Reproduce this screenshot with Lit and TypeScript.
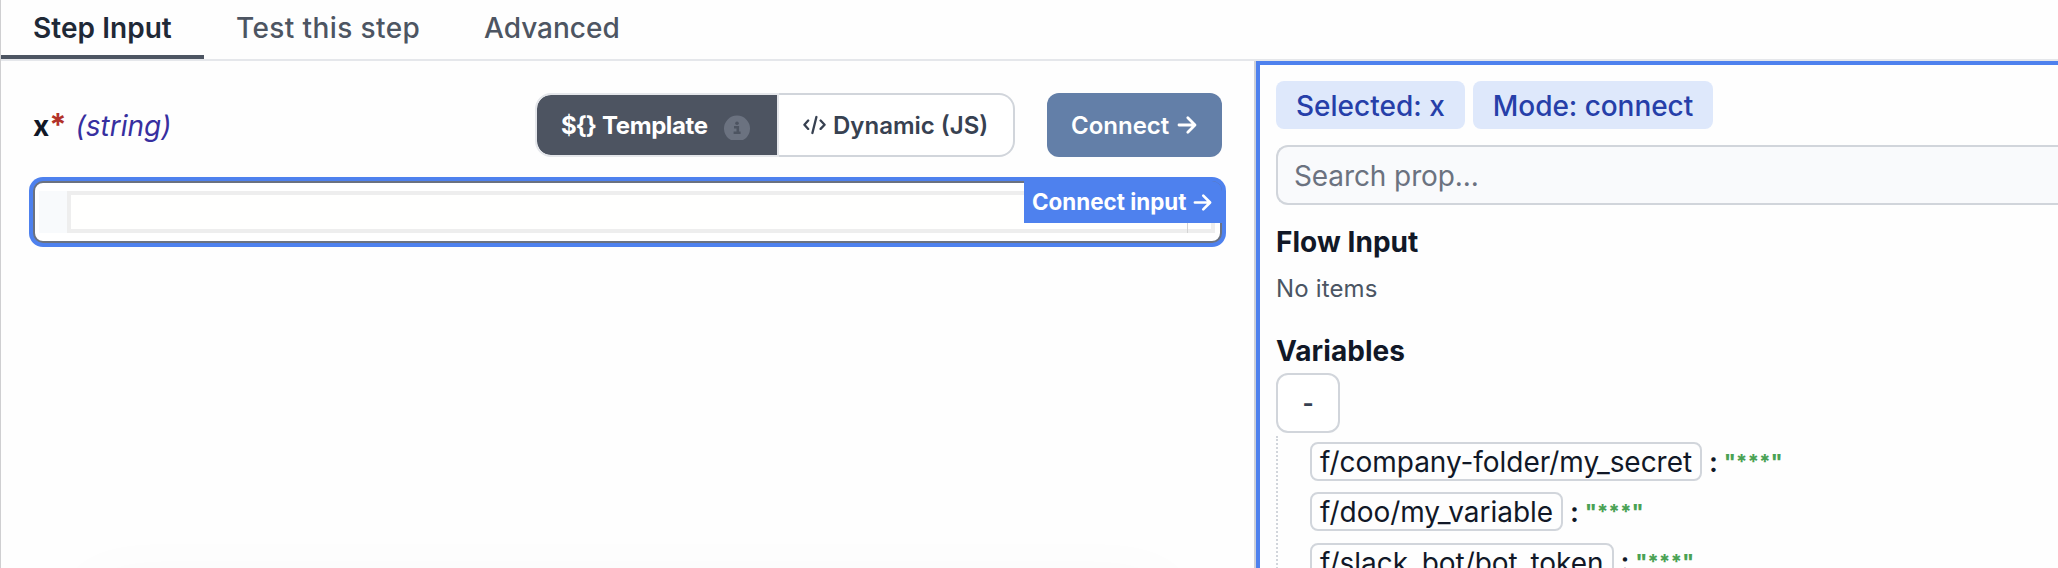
import { LitElement, html, css, svg } from "lit";
import { customElement } from "lit/decorators.js";

const arrow = (cls: string) => html`<svg class=${cls} viewBox="0 0 20 20" fill="none" stroke="currentColor" stroke-width="2.8" stroke-linecap="round" stroke-linejoin="round">${svg`<path d="M2 10H17.5M10.8 2.8L18 10L10.8 17.2"/>`}</svg>`;

const variables = ["f/company-folder/my_secret", "f/doo/my_variable", "f/slack_bot/bot_token"];

@customElement("app-root")
export class AppRoot extends LitElement {
  static styles = css`
    :host {
      display: block;
      height: 568px;
      overflow: hidden;
      background: #fefefe;
      color: #111827;
      font-family: Inter, "Liberation Sans", sans-serif;
      font-size: 28px;
    }
    * { box-sizing: border-box; }
    .frame { height: 568px; border-left: 1px solid #cfcfd1; display: flex; flex-direction: column; }
    .tabs { flex: none; height: 61px; display: flex; border-bottom: 2px solid #e5e7eb; }
    .tab { height: 59px; padding: 7px 32px 0; line-height: 42px; font-weight: 500; color: #4d5562; white-space: nowrap; border-bottom: 4px solid transparent; }
    .tab.on { width: 203px; color: #1f2937; border-bottom-color: #4d5562; font-weight: 600; letter-spacing: 0.05px; }
    .tab.wide { width: 248px; letter-spacing: 0.4px; }
    .body { flex: 1; min-height: 0; display: flex; }
    .left { width: 1253px; flex: none; padding: 32px 32px 0; display: flex; flex-direction: column; overflow: hidden; }
    .head { height: 64px; display: flex; align-items: center; }
    .label { flex: 1; display: flex; align-items: baseline; white-space: nowrap; padding-top: 1px; }
    .name { font-weight: 700; }
    .req { color: #b23129; font-weight: 700; font-size: 31px; line-height: 34px; }
    .type { margin-left: 9px; font-style: italic; color: #372fa0; }
    .toggle { display: flex; height: 64px; margin-right: 32px; font-size: 24px; font-weight: 600; white-space: nowrap; }
    .opt { display: flex; align-items: center; border: 2px solid #d1d5db; }
    .opt.a { width: 244px; padding-left: 24px; border-color: #e5e7eb; border-radius: 16px 0 0 16px; background: #4d5461; color: #fff; background-clip: padding-box; }
    .opt.b { width: 236px; padding-left: 24px; border-left: 0; border-radius: 0 16px 16px 0; background: #fff; color: #374151; }
    .t0 { width: 41px; }
    .t1 { width: 122px; }
    .t0, .t1 { font-weight: 700; letter-spacing: -0.4px; }
    .t0 { letter-spacing: -1.1px; }
    .info { width: 26px; height: 26px; margin: 5px 0 0 0; }
    .code { width: 23px; height: 20px; margin-right: 7px; }
    .connect { width: 175px; height: 64px; border-radius: 12px; background: #637fa8; color: #fff; display: flex; align-items: center; padding-left: 24px; font-size: 24px; font-weight: 600; white-space: nowrap; }
    .ar { width: 20px; height: 20px; margin-left: 8px; }
    .editor { position: relative; height: 62px; margin-top: 24px; border: 2px solid #6b7280; border-radius: 10px; box-shadow: 0 0 0 4px #4e81ee; background: #fff; padding: 8px 5px 8px 4px; display: flex; }
    .gutter { width: 28px; background: #f8fafc; }
    .line { flex: 1; border: 4px solid #eee; background: #fffffe; display: flex; justify-content: flex-end; padding-right: 23px; }
    .ruler { width: 1px; height: 38px; background: #d4d4d4; }
    .tag { position: absolute; top: -2px; right: -2px; width: 198px; height: 42px; border-radius: 0 10px 0 0; background: #4e81ee; color: #fff; display: flex; align-items: center; padding: 0 0 2px 8px; font-size: 22.4px; font-weight: 700; white-space: nowrap; }
    .tag .ar { margin: 2px 0 0 7px; width: 19px; height: 19px; }
    .spacer { flex: 1; }
    .drawer { flex: none; height: 10px; margin: 0 70px -46px; border-radius: 40px; box-shadow: 0 0 70px 20px rgba(0, 0, 0, 0.03); }
    .right { flex: 1; min-width: 0; border-left: 2px solid #ced1d8; }
    .pane { height: 600px; border: 4px solid #4e81ee; border-right: 0; padding: 16px 0 0 16px; display: flex; flex-direction: column; align-items: flex-start; }
    .badges { display: flex; gap: 8px; }
    .badge { height: 48px; line-height: 51px; padding: 0 20px; border-radius: 8px; background: #dee8fb; color: #263fa9; font-weight: 500; white-space: nowrap; }
    .badge + .badge { letter-spacing: -0.05px; }
    .search { flex: none; align-self: stretch; height: 60px; margin-top: 16px; border: 2px solid #d1d5db; border-right: 0; border-radius: 12px 0 0 12px; background: #f9fafc; color: #6b7280; padding-left: 16px; line-height: 59px; letter-spacing: -0.1px; }
    .title { flex: none; height: 40px; line-height: 40px; font-weight: 700; letter-spacing: 0.05px; margin-top: 17px; }
    .title.v { margin-top: 24px; line-height: 43px; }
    .empty { flex: none; height: 36px; line-height: 38px; margin-top: 8px; font-size: 24px; letter-spacing: 0.15px; color: #4b5563; }
    .fold { flex: none; width: 64px; height: 60px; margin-top: 3px; border: 2px solid #d1d5db; border-radius: 12px; background: #fff; color: #374151; font-size: 24px; font-weight: 700; line-height: 57px; text-align: center; }
    .tree { flex: none; margin-top: 3px; padding: 6px 0 0 32px; border-left: 2px dotted #d1d5db; height: 200px; }
    .row { display: flex; align-items: center; height: 39px; margin-bottom: 11.4px; white-space: nowrap; }
    .key { height: 39px; line-height: 36px; border: 2px solid #d1d5db; border-radius: 8px; padding: 0 8px; letter-spacing: -0.04px; }
    .colon { margin-left: 7px; font-weight: 600; }
    .val { margin-left: 6px; font-size: 20px; font-weight: 800; color: #4aa254; }
  `;

  render() {
    return html`
      <div class="frame">
        <div class="tabs">
          <div class="tab on">Step Input</div>
          <div class="tab wide">Test this step</div>
          <div class="tab">Advanced</div>
        </div>
        <div class="body">
          <div class="left">
            <div class="head">
              <div class="label"><span class="name">x</span><span class="req">*</span><span class="type">(string)</span></div>
              <div class="toggle">
                <div class="opt a"><span class="t0">\${}</span><span class="t1">Template</span>
                  <svg class="info" viewBox="0 0 26 26"><path d="M4.6 23.5A13 13 0 1 1 21.4 23.5L19 25H7Z" fill="#6b7280"/><circle cx="13" cy="8.2" r="1.8" fill="#4d5461"/><path d="M10 12.2h3.8v5.4M9.6 17.8h7" stroke="#4d5461" stroke-width="2.6" fill="none"/></svg>
                </div>
                <div class="opt b">
                  <svg class="code" viewBox="0 0 23 20" fill="none" stroke="currentColor" stroke-width="2.3" stroke-linecap="round" stroke-linejoin="round"><path d="M5.2 5.5L1.4 9.7L5.2 13.9M17.6 5.5L21.6 9.7L17.6 13.9M13.4 2L9.4 18"/></svg>
                  <span>Dynamic (JS)</span>
                </div>
              </div>
              <div class="connect"><span>Connect</span>${arrow("ar")}</div>
            </div>
            <div class="editor">
              <div class="gutter"></div>
              <div class="line"><div class="ruler"></div></div>
              <div class="tag"><span>Connect input</span>${arrow("ar")}</div>
            </div>
            <div class="spacer"></div>
            <div class="drawer"></div>
          </div>
          <div class="right">
            <div class="pane">
              <div class="badges"><div class="badge">Selected: x</div><div class="badge">Mode: connect</div></div>
              <div class="search">Search prop...</div>
              <div class="title">Flow Input</div>
              <div class="empty">No items</div>
              <div class="title v">Variables</div>
              <div class="fold">-</div>
              <div class="tree">
                ${variables.map((v) => html`<div class="row"><span class="key">${v}</span><span class="colon">:</span><span class="val">"***"</span></div>`)}
              </div>
            </div>
          </div>
        </div>
      </div>
    `;
  }
}
